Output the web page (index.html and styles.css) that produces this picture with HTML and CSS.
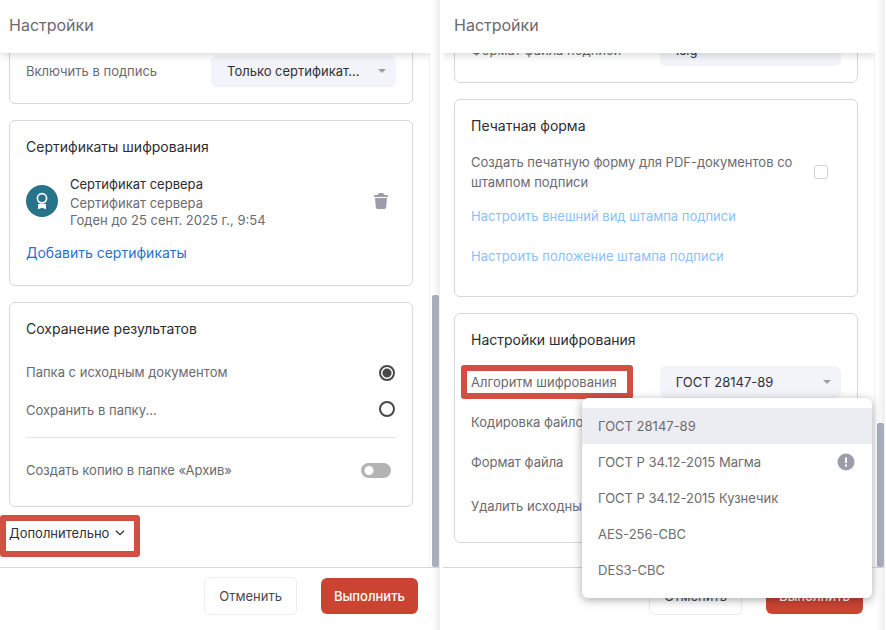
FILE: index.html
```html
<!DOCTYPE html>
<html lang="ru">
<head>
  <meta charset="UTF-8">
  <title>Настройки</title>
  <meta name="viewport" content="width=device-width, initial-scale=1.0">
  <link rel="stylesheet" href="styles.css">
</head>
<body>

  <section class="panel">
    <header class="panel-header"><h1>Настройки</h1></header>

    <div class="panel-body">
      <div class="content">
        <div class="card">
          <div class="row">
            <label for="include">Включить в подпись</label>
            <select id="include" class="select wide">
              <option>Только сертификат...</option>
            </select>
          </div>
        </div>

        <div class="card">
          <h2>Сертификаты шифрования</h2>
          <div class="cert">
            <svg class="cert-icon" viewBox="0 0 32 32" width="32" height="32">
              <circle cx="16" cy="16" r="16" fill="#26738a"/>
              <circle cx="16" cy="13.3" r="4.6" fill="none" stroke="#fff" stroke-width="1.7"/>
              <path d="M12 19h8v5.3l-4-1.5-4 1.5z" fill="#fff"/>
            </svg>
            <div class="cert-text">
              <div class="cert-name">Сертификат сервера</div>
              <div class="cert-info">Сертификат сервера</div>
              <div class="cert-info">Годен до 25 сент. 2025 г., 9:54</div>
            </div>
            <button class="icon-btn" aria-label="Удалить">
              <svg viewBox="0 0 14 16" width="14" height="16" fill="#9b9ea8">
                <path d="M4 1.2Q4.6 0 5.4 0h3.2Q9.4 0 10 1.2L10.4 2H13.2q.8 0 .8 1v1H0V3q0-1 .8-1h2.8z"/>
                <path d="M1 5h12l-.8 9.2q-.2 1.8-2 1.8H3.8q-1.8 0-2-1.800z"/>
              </svg>
            </button>
          </div>
          <a class="link add-cert" href="#">Добавить сертификаты</a>
        </div>

        <div class="card">
          <h2>Сохранение результатов</h2>
          <div class="save-options">
            <div class="save-labels">
              <label for="save-source">Папка с исходным документом</label>
              <label for="save-folder">Сохранить в папку...</label>
            </div>
            <div class="save-radios">
              <input type="radio" name="save" id="save-source" checked>
              <input type="radio" name="save" id="save-folder">
            </div>
          </div>
          <div class="archive">
            <label for="archive">Создать копию в папке «Архив»</label>
            <input type="checkbox" id="archive" class="toggle">
          </div>
        </div>

        <button class="more marked">
          Дополнительно
          <svg viewBox="0 0 10 6" width="10" height="6" fill="none" stroke="#303038" stroke-width="1.3">
            <path d="M1 .7l4 4 4-4"/>
          </svg>
        </button>
      </div>
      <div class="track"><div class="thumb" style="height: 53%"></div></div>
    </div>

    <footer class="panel-footer">
      <button class="btn">Отменить</button>
      <button class="btn primary">Выполнить</button>
    </footer>
  </section>

  <section class="panel second">
    <header class="panel-header"><h1>Настройки</h1></header>

    <div class="panel-body">
      <div class="content">
        <div class="card">
          <div class="row">
            <label for="sign-format">Формат файла подписи</label>
            <select id="sign-format" class="select no-arrow">
              <option>.sig</option>
            </select>
          </div>
        </div>

        <div class="card">
          <h2>Печатная форма</h2>
          <div class="print-form">
            <label for="print">Создать печатную форму для PDF-документов со штампом подписи</label>
            <input type="checkbox" id="print" class="checkbox">
          </div>
          <div class="stamp-links">
            <a class="link disabled" href="#">Настроить внешний вид штампа подписи</a>
            <a class="link disabled" href="#">Настроить положение штампа подписи</a>
          </div>
        </div>

        <div class="card encryption">
          <h2>Настройки шифрования</h2>
          <div class="row">
            <label for="algorithm" class="marked">Алгоритм шифрования</label>
            <select id="algorithm" class="select">
              <option>ГОСТ 28147-89</option>
            </select>
          </div>
          <div class="row"><span>Кодировка файлов</span></div>
          <div class="row"><span>Формат файла</span></div>
          <div class="row last"><span>Удалить исходные</span></div>
        </div>
      </div>
      <div class="track"><div class="thumb" style="height: 28%"></div></div>
    </div>

    <footer class="panel-footer">
      <button class="btn">Отменить</button>
      <button class="btn primary">Выполнить</button>
    </footer>

    <div class="menu">
      <button class="menu-item active">ГОСТ 28147-89</button>
      <button class="menu-item">
        ГОСТ Р 34.12-2015 Магма
        <svg viewBox="0 0 18 18" width="18" height="18">
          <circle cx="9" cy="9" r="8.5" fill="#9b9ea8"/>
          <path d="M8 4.5h2V10H8zM8 11.500h2v2H8z" fill="#fff"/>
        </svg>
      </button>
      <button class="menu-item">ГОСТ Р 34.12-2015 Кузнечик</button>
      <button class="menu-item">AES-256-CBC</button>
      <button class="menu-item">DES3-CBC</button>
    </div>
  </section>

</body>
</html>
```

FILE: styles.css
```css
* {
  box-sizing: border-box;
}

body {
  margin: 0;
  padding-right: 1px;
  height: 100vh;
  display: grid;
  grid-template-columns: 440fr 442fr;
  grid-template-rows: 100%;
  gap: 3px;
  background: #fff;
  color: #6a6a70;
  font-family: Inter, "Liberation Sans", sans-serif;
  font-size: 13px;
  line-height: 20px;
}

button, select {
  font: inherit;
}

h1, h2 {
  margin: 0;
  font-weight: 400;
}

h1 {
  font-size: 16px;
}

h2 {
  color: #2c2c33;
  font-size: 14px;
  line-height: 20px;
}

.panel {
  position: relative;
  display: flex;
  flex-direction: column;
  min-width: 0;
  background: linear-gradient(to left, #eee, #fff 8px);
}

.panel-header {
  position: relative;
  z-index: 1;
  display: flex;
  align-items: center;
  height: 53px;
  margin-right: 10px;
  padding: 0 9px 4px;
  background: #fff;
  box-shadow: 0 2px 8px rgba(0, 0, 0, 0.16);
  clip-path: inset(0 0 -12px 0);
}

.panel-body {
  flex: 1;
  display: flex;
  min-height: 0;
}

.content {
  flex: 1;
  display: flex;
  flex-direction: column;
  justify-content: flex-end;
  gap: 16px;
  min-width: 0;
  padding: 0 16px 24px 9px;
  overflow: hidden;
  background: #fff;
  border-right: 1px solid #f2f2f7;
}

.second .panel-header,
.second .content {
  padding-left: 11px;
}

.track {
  width: 10px;
  padding: 0 1px 0 2px;
  display: flex;
  flex-direction: column;
  justify-content: flex-end;
}

.thumb {
  background: #a9adbb;
  border-radius: 2px;
}

.card {
  flex-shrink: 0;
  padding: 16px;
  border: 1px solid #d5d6de;
  border-radius: 6px;
}

.row {
  display: flex;
  justify-content: space-between;
  align-items: center;
  height: 32px;
}

.select {
  appearance: none;
  width: 49%;
  height: 32px;
  padding: 0 30px 0 16px;
  border: none;
  border-radius: 6px;
  background: #f3f4fa url("data:image/svg+xml,%3Csvg xmlns='http://www.w3.org/2000/svg' viewBox='0 0 8 4'%3E%3Cpath d='M0 0h8L4 4z' fill='%239b9ea8'/%3E%3C/svg%3E") no-repeat right 10px center / 8px 4px;
  color: #303038;
}

.select.wide {
  width: 50%;
}

.select.no-arrow {
  background-image: none;
}

.link {
  color: #2a6fd0;
  text-decoration: none;
}

.link.disabled {
  color: #8cc0fb;
}

.cert {
  display: flex;
  align-items: center;
  margin-top: 16px;
  padding-right: 8px;
}

.cert-text {
  flex: 1;
  margin-left: 12px;
}

.cert-name {
  color: #2c2c33;
  line-height: 22px;
}

.cert-info {
  line-height: 17px;
}

.icon-btn {
  display: flex;
  padding: 0;
  border: none;
  background: none;
}

.add-cert {
  display: block;
  margin: 14px 0 6px;
  font-size: 14px;
}

.save-options {
  display: flex;
  justify-content: space-between;
  align-items: center;
  margin-top: 23px;
  padding-bottom: 17px;
  border-bottom: 1px solid #e4e4e8;
}

.save-labels,
.save-radios {
  display: flex;
  flex-direction: column;
  gap: 18px;
}

.save-radios {
  gap: 20px;
  padding-right: 1px;
}

.save-radios input {
  appearance: none;
  width: 16px;
  height: 16px;
  margin: 0;
  border: 2px solid #48484a;
  border-radius: 50%;
}

.save-radios input:checked {
  background: radial-gradient(circle, #48484a 4px, #fff 5px);
}

.archive {
  display: flex;
  justify-content: space-between;
  align-items: center;
  margin: 22px 0 10px;
  padding-right: 5px;
}

.toggle {
  appearance: none;
  width: 30px;
  height: 15px;
  margin: 0;
  border-radius: 8px;
  background: radial-gradient(circle at 8px 50%, #fff 4px, #b3b3b3 5px);
}

.more {
  display: flex;
  align-items: center;
  align-self: flex-start;
  flex-shrink: 0;
  gap: 6px;
  padding: 0;
  border: none;
  background: none;
  color: #303038;
}

.marked {
  position: relative;
}

.marked::after {
  content: "";
  position: absolute;
  inset: -7px -16px -7px -10px;
  border: 6px solid #d15043;
  border-radius: 3px;
}

.more::after {
  inset: -8px -15px -14px -9px;
}

.print-form {
  display: flex;
  justify-content: space-between;
  align-items: center;
  gap: 16px;
  margin-top: 16px;
  padding-right: 13px;
}

.checkbox {
  appearance: none;
  flex-shrink: 0;
  width: 14px;
  height: 14px;
  margin: 0;
  border: 1px solid #d0d1da;
  border-radius: 3px;
}

.stamp-links {
  display: flex;
  flex-direction: column;
  gap: 20px;
  margin: 14px 0;
}

.encryption {
  display: flex;
  flex-direction: column;
  gap: 8px;
}

.encryption h2 {
  margin-bottom: 8px;
}

.row.last {
  height: 40px;
}

.panel-footer {
  display: flex;
  justify-content: flex-end;
  align-items: center;
  gap: 24px;
  height: 63px;
  padding: 0 22px 6px 0;
  border-top: 1px solid #d5d6de;
}

.btn {
  height: 38px;
  padding: 0 14px;
  border: 1px solid #e9ebf5;
  border-radius: 6px;
  background: #fff;
  color: #48484f;
}

.btn.primary {
  height: 36px;
  padding: 0 13px;
  border: none;
  background: #cb4432;
  color: #fff;
  font-weight: 500;
}

.menu {
  position: absolute;
  right: 13px;
  bottom: 32px;
  z-index: 2;
  width: 290px;
  padding: 10px 0;
  border-radius: 6px;
  background: #fff;
  box-shadow: 0 2px 10px rgba(0, 0, 0, 0.35);
}

.menu-item {
  display: flex;
  justify-content: space-between;
  align-items: center;
  width: 100%;
  height: 36px;
  padding: 0 17px 0 16px;
  border: none;
  background: none;
  color: #6c6c6c;
  text-align: left;
}

.menu-item.active {
  background: #ecedf3;
}
```
